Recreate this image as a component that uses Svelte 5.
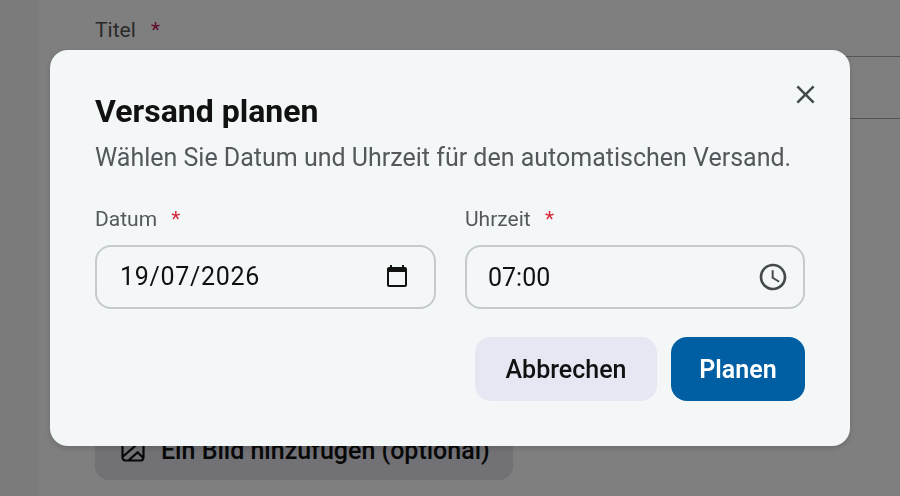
<script lang="ts">
	const closePath = 'M19 6.41 17.59 5 12 10.59 6.41 5 5 6.41 10.59 12 5 17.59 6.41 19 12 13.41 17.59 19 19 17.59 13.41 12z';
	const calendarPath = 'M20 3h-1V1h-2v2H7V1H5v2H4c-1.1 0-2 .9-2 2v16c0 1.1.9 2 2 2h16c1.1 0 2-.9 2-2V5c0-1.1-.9-2-2-2zm0 18H4V8h16v13z';
	const clockPath = 'M11.99 2C6.47 2 2 6.48 2 12s4.47 10 9.99 10C17.52 22 22 17.52 22 12S17.52 2 11.99 2zM12 20c-4.42 0-8-3.58-8-8s3.58-8 8-8 8 3.58 8 8-3.58 8-8 8zm.5-13H11v6l5.25 3.15.75-1.23-4.5-2.67z';
</script>

<div class="page">
	<aside class="rail"></aside>
	<main>
		<div class="page-label">Titel <span class="page-star">*</span></div>
		<div class="page-input"></div>
		<button class="page-image">
			<svg viewBox="0 0 24 24" width="28" height="28" aria-hidden="true">
				<path d="M3 5.500A2.500 2.500 0 0 1 5.500 3h13A2.500 2.500 0 0 1 21 5.500v13a2.500 2.500 0 0 1-2.500 2.500h-13A2.500 2.500 0 0 1 3 18.500zM3 18 19 4M8 21l8-7 5 5" fill="none" stroke="currentColor" stroke-width="1.900" />
			</svg>
			Ein Bild hinzufügen (optional)
		</button>
	</main>
</div>

<div class="overlay">
	<section class="dialog">
		<button class="close" aria-label="Schließen">
			<svg viewBox="0 0 24 24" width="31" height="31" aria-hidden="true"><path d={closePath} /></svg>
		</button>
		<h2>Versand planen</h2>
		<p>Wählen Sie Datum und Uhrzeit für den automatischen Versand.</p>
		<div class="fields">
			<div class="field">
				<span class="label">Datum <span class="star">*</span></span>
				<div class="input">
					<span class="value date">19/07/2026</span>
					<svg class="cal" viewBox="0 0 24 24" width="24" height="24" aria-hidden="true"><path d={calendarPath} /></svg>
				</div>
			</div>
			<div class="field">
				<span class="label">Uhrzeit <span class="star">*</span></span>
				<div class="input time">
					<span class="value">07:00</span>
					<svg class="clock" viewBox="0 0 24 24" width="32" height="32" aria-hidden="true"><path d={clockPath} /></svg>
				</div>
			</div>
		</div>
		<div class="actions">
			<button class="btn cancel">Abbrechen</button>
			<button class="btn primary">Planen</button>
		</div>
	</section>
</div>

<style>
	:global(body) {
		font-family: Roboto, "Liberation Sans", sans-serif;
		overflow: hidden;
	}

	.page {
		display: flex;
		height: 496px;
		background: #ffffff;
	}

	.rail {
		width: 38px;
		background: #f6f6f6;
	}

	main {
		flex: 1;
		padding: 16px 0 0 57px;
		min-width: 0;
	}

	.page-label {
		font-size: 21px;
		line-height: 28px;
		color: #555;
	}

	.page-star {
		margin-left: 10px;
		color: #c2185b;
	}

	.page-input {
		height: 61px;
		margin-top: 12px;
		border-top: 1px solid #aaa;
		border-bottom: 1px solid #aaa;
	}

	.page-image {
		display: flex;
		align-items: center;
		gap: 14px;
		width: 418px;
		height: 60px;
		margin-top: 301px;
		padding: 0 0 0 24px;
		border: 0;
		border-radius: 14px;
		background: #e2e2ec;
		font: 500 25px Roboto, sans-serif;
		color: #111;
	}

	.overlay {
		position: fixed;
		inset: 0;
		display: flex;
		align-items: center;
		justify-content: center;
		background: rgba(0, 0, 0, 0.5);
	}

	.dialog {
		position: relative;
		box-sizing: border-box;
		width: 800px;
		height: 396px;
		padding: 43px 45px 0;
		border-radius: 18px;
		background: #f3f7f8;
		box-shadow: 0 2px 6px rgba(0, 0, 0, 0.16);
	}

	.close {
		position: absolute;
		top: 29px;
		right: 29px;
		display: flex;
		padding: 0;
		border: 0;
		background: none;
		fill: #454a4d;
	}

	h2 {
		margin: 0;
		font-size: 32px;
		line-height: 36px;
		font-weight: 700;
		color: #111;
	}

	p {
		margin: 14px 0 0;
		font-size: 25px;
		line-height: 30px;
		color: #54585c;
	}

	.fields {
		display: grid;
		grid-template-columns: 341px 340px;
		gap: 29px;
		margin-top: 33px;
	}

	.field {
		display: flex;
		flex-direction: column;
		gap: 13px;
	}

	.label {
		font-size: 21px;
		line-height: 26px;
		color: #55595d;
	}

	.star {
		margin-left: 9px;
		color: #d62839;
	}

	.input {
		box-sizing: border-box;
		display: flex;
		align-items: center;
		justify-content: space-between;
		height: 64px;
		padding: 0 27px 2px 23px;
		border: 2px solid #c6cacc;
		border-radius: 16px;
		font-size: 25px;
		color: #111;
	}

	.time {
		padding: 0 14px 0 21px;
	}

	.date {
		letter-spacing: 0.700px;
	}

	.cal {
		fill: #111;
		margin-right: -2px;
	}

	.clock {
		fill: #45494c;
	}

	.actions {
		display: flex;
		justify-content: flex-end;
		gap: 14px;
		margin-top: 28px;
	}

	.btn {
		height: 64px;
		border: 0;
		border-radius: 16px;
		font: 500 25px Roboto, sans-serif;
	}

	.cancel {
		width: 182px;
		background: #e5e7f2;
		color: #111;
	}

	.primary {
		width: 134px;
		background: #005fa3;
		color: #fff;
		font-weight: 600;
	}
</style>
